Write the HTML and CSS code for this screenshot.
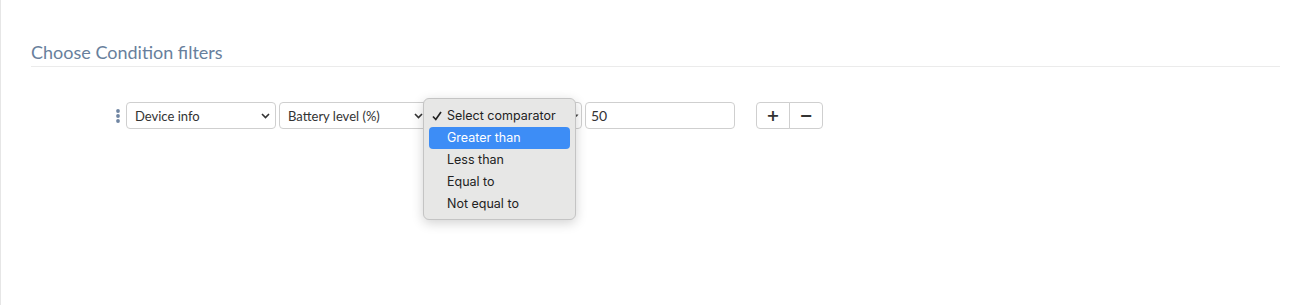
FILE: index.html
```html
<!DOCTYPE html>
<html lang="en">
<head>
  <meta charset="UTF-8">
  <title>Condition filters</title>
  <link rel="stylesheet" href="styles.css">
</head>
<body>
  <div class="panel">
    <h2 class="section-title">Choose Condition filters</h2>

    <div class="filter-row">
      <svg class="handle" width="4" height="14" viewBox="0 0 4 14">
        <circle cx="2" cy="2" r="1.9" />
        <circle cx="2" cy="7" r="1.9" />
        <circle cx="2" cy="12" r="1.9" />
      </svg>

      <div class="select-wrap">
        <select class="field">
          <option>Device info</option>
        </select>
        <svg class="chevron" width="9" height="6" viewBox="0 0 9 6"><path d="M1 1l3.5 3.5L8 1" /></svg>
      </div>

      <div class="select-wrap">
        <select class="field">
          <option>Battery level (%)</option>
        </select>
        <svg class="chevron" width="9" height="6" viewBox="0 0 9 6"><path d="M1 1l3.5 3.5L8 1" /></svg>
      </div>

      <div class="select-wrap">
        <select class="field">
          <option>Select comparator</option>
        </select>
        <svg class="chevron small" width="5" height="4" viewBox="0 0 5 4"><path d="M0.5 0.5l2 2.5 2-2.5" /></svg>

        <!-- open native popup -->
        <ul class="popup">
          <li class="checked"><svg class="tick" width="10" height="10" viewBox="0 0 10 10"><path d="M1 5.5l2.8 3L9 1" /></svg>Select comparator</li>
          <li class="active">Greater than</li>
          <li>Less than</li>
          <li>Equal to</li>
          <li>Not equal to</li>
        </ul>
      </div>

      <input class="field value" type="text" value="50">

      <div class="btn-group">
        <button class="btn">+</button>
        <button class="btn">−</button>
      </div>
    </div>
  </div>
</body>
</html>
```

FILE: styles.css
```css
body {
  margin: 0;
  font-family: Lato, 'Open Sans', sans-serif;
  color: #333;
  background: #fff;
}
.panel {
  border-left: 1px solid #e6e6e6;
  min-height: 305px;
  box-sizing: border-box;
  padding: 41px 10px 0 30px;
}
.section-title {
  margin: 0;
  font-size: 18px;
  line-height: 22px;
  font-weight: 400;
  color: #687f9c;
  padding-bottom: 3px;
  border-bottom: 1px solid #ebebeb;
}
.filter-row {
  display: flex;
  align-items: center;
  gap: 3px;
  margin-top: 35px;
  padding-left: 85px;
}
.handle {
  fill: #6f85a2;
  margin-right: 3px;
}
.select-wrap {
  position: relative;
}
.field {
  appearance: none;
  -webkit-appearance: none;
  box-sizing: border-box;
  width: 150px;
  height: 27px;
  margin: 0;
  padding: 0 20px 0 8px;
  border: 1px solid #cfcfcf;
  border-radius: 4px;
  background: #fff;
  font-family: Lato, sans-serif;
  font-size: 13px;
  color: #333;
  outline: none;
}
.value {
  padding-left: 5px;
  font-size: 14px;
}
.chevron {
  position: absolute;
  right: 6px;
  top: 11px;
  fill: none;
  stroke: #333;
  stroke-width: 1.6;
  pointer-events: none;
}
.chevron.small {
  right: 3px;
  top: 12px;
  fill: #444;
  stroke: none;
}
.popup {
  position: absolute;
  left: -9px;
  top: -4px;
  width: 153px;
  box-sizing: border-box;
  margin: 0;
  padding: 6px 5px 4px 5px;
  list-style: none;
  background: #e7e7e6;
  border: 1px solid #c4c4c4;
  border-radius: 6px;
  box-shadow: 0 3px 12px rgba(0, 0, 0, 0.18);
  font-family: Inter, 'Noto Sans', sans-serif;
  font-size: 12.5px;
  color: #222;
}
.popup li {
  height: 22px;
  line-height: 22px;
  padding-left: 18px;
  border-radius: 4px;
  position: relative;
}
.popup .tick {
  position: absolute;
  left: 3px;
  top: 6px;
  fill: none;
  stroke: #222;
  stroke-width: 1.7;
}
.popup .active {
  background: #3d8df6;
  color: #fff;
}
.btn-group {
  display: flex;
  margin-left: 18px;
}
.btn {
  width: 34px;
  height: 27px;
  padding: 0;
  border: 1px solid #cfcfcf;
  background: #fff;
  font-family: 'DejaVu Sans', sans-serif;
  font-size: 16px;
  font-weight: 700;
  color: #333;
}
.btn:first-child {
  border-radius: 4px 0 0 4px;
}
.btn:last-child {
  border-radius: 0 4px 4px 0;
  margin-left: -1px;
}
```
